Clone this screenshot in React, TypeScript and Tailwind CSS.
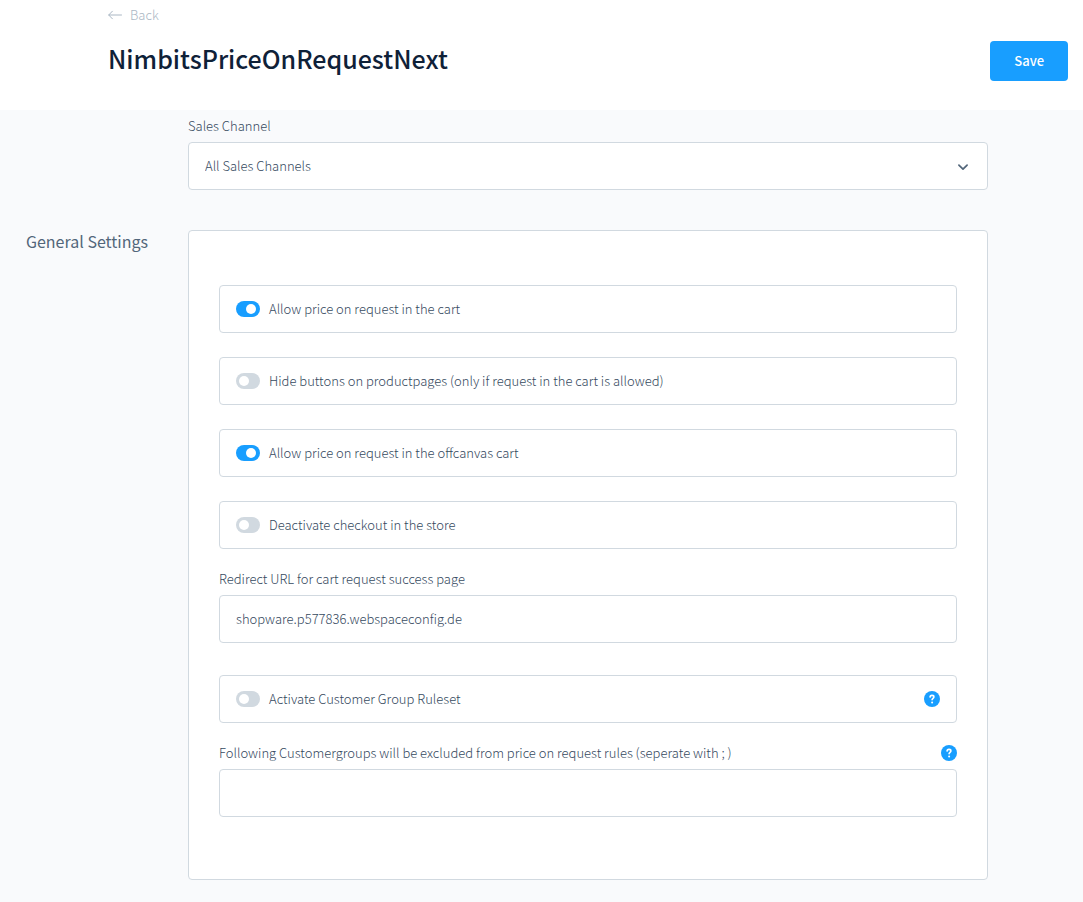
import { useId, useState } from "react"

function HelpButton({ label }: { label: string }) {
  return (
    <button type="button" aria-label={label} className="shrink-0 rounded-full">
      <svg viewBox="0 0 16 16" className="w-4 h-4" fill="none">
        <circle cx="8" cy="8" r="8" fill="#189eff" />
        <path
          d="M6.1 6.1C6.1 5 6.9 4.4 8 4.4s1.9.7 1.9 1.6c0 1.3-1.8 1.4-1.8 2.8"
          stroke="#fff"
          strokeWidth="1.6"
          strokeLinecap="round"
          strokeLinejoin="round"
        />
        <circle cx="8.1" cy="11.4" r="1" fill="#fff" />
      </svg>
    </button>
  )
}

type SwitchFieldProps = {
  label: string
  defaultChecked?: boolean
  help?: boolean
}

function SwitchField({ label, defaultChecked = false, help = false }: SwitchFieldProps) {
  const id = useId()
  const [checked, setChecked] = useState(defaultChecked)

  return (
    <div className="flex items-center h-12 pl-4 pr-4 rounded border border-[#d1d9e0] bg-white">
      <input
        id={id}
        type="checkbox"
        role="switch"
        checked={checked}
        onChange={(e) => setChecked(e.target.checked)}
        className="appearance-none flex items-center shrink-0 w-6 h-4 pl-[3px] pr-1 rounded-full bg-[#d1d9e0] checked:bg-[#189eff] checked:justify-end cursor-pointer before:block before:w-[10px] before:h-[10px] before:rounded-full before:bg-white"
      />
      <label htmlFor={id} className="flex-1 pl-[9px] leading-5 cursor-pointer">
        {label}
      </label>
      {help && <HelpButton label={label} />}
    </div>
  )
}

type TextFieldProps = {
  label: string
  defaultValue?: string
  help?: boolean
}

function TextField({ label, defaultValue = "", help = false }: TextFieldProps) {
  const id = useId()

  return (
    <div>
      <div className="flex items-center justify-between mb-1.5">
        <label htmlFor={id} className="leading-5">
          {label}
        </label>
        {help && <HelpButton label={label} />}
      </div>
      <input
        id={id}
        type="text"
        defaultValue={defaultValue}
        className="block w-full h-12 px-4 pb-0.5 rounded border border-[#d1d9e0] bg-white outline-none focus:border-[#189eff]"
      />
    </div>
  )
}

function SalesChannelSelect() {
  return (
    <div>
      <label htmlFor="sales-channel" className="block mb-1.5 leading-5">
        Sales Channel
      </label>
      <div className="relative">
        <select
          id="sales-channel"
          className="appearance-none block w-full h-12 pl-4 pr-12 rounded border border-[#d1d9e0] bg-white outline-none focus:border-[#189eff]"
        >
          <option>All Sales Channels</option>
        </select>
        <svg
          viewBox="0 0 16 16"
          className="absolute right-4 top-4 w-4 h-4 pointer-events-none"
          fill="none"
          stroke="#52667a"
          strokeWidth="1.7"
          strokeLinecap="round"
          strokeLinejoin="round"
        >
          <path d="M2.9 7.1 7 11.1l4.1-4" />
        </svg>
      </div>
    </div>
  )
}

function PageHeader() {
  return (
    <header className="bg-white pl-[108px] pr-[15px] pt-[5px] pb-[26px]">
      <a href="#" className="flex items-center gap-2 w-fit h-5 text-[#aab7c4] leading-5">
        <svg
          viewBox="0 0 14 10"
          className="w-[14px] h-[10px]"
          fill="none"
          stroke="currentColor"
          strokeLinecap="round"
          strokeLinejoin="round"
        >
          <path d="M13.5 5H.8M4.4 1.2.7 5l3.7 3.8" />
        </svg>
        Back
      </a>
      <div className="flex items-center justify-between mt-[13px]">
        <h1 className="pb-1.5 text-[25px] leading-10 font-medium text-[#0f2138]">NimbitsPriceOnRequestNext</h1>
        <button type="button" className="h-10 px-6 rounded bg-[#189eff] text-white font-medium">
          Save
        </button>
      </div>
    </header>
  )
}

export default function App() {
  return (
    <div className="min-h-screen bg-[#f9fafc] text-[13px] font-light text-[#35495e] font-['Noto_Sans_CJK_SC',sans-serif]">
      <PageHeader />
      <main className="grid grid-cols-[188px_minmax(0,800px)] pt-1.5 pb-5 pr-6">
        <div className="col-start-2">
          <SalesChannelSelect />
        </div>

        <h2 className="mt-10 pr-10 text-right text-base leading-[22px] font-normal text-[#52667a]">General Settings</h2>
        <section className="mt-10 px-[30px] pt-[54px] pb-[62px] rounded border border-[#d1d9e0] bg-white">
          <div className="flex flex-col gap-6 mb-5">
            <SwitchField label="Allow price on request in the cart" defaultChecked />
            <SwitchField label="Hide buttons on productpages (only if request in the cart is allowed)" />
            <SwitchField label="Allow price on request in the offcanvas cart" defaultChecked />
            <SwitchField label="Deactivate checkout in the store" />
          </div>
          <TextField
            label="Redirect URL for cart request success page"
            defaultValue="shopware.p577836.webspaceconfig.de"
          />
          <div className="mt-8 mb-5">
            <SwitchField label="Activate Customer Group Ruleset" help />
          </div>
          <TextField
            label="Following Customergroups will be excluded from price on request rules (seperate with ; )"
            help
          />
        </section>
      </main>
    </div>
  )
}
